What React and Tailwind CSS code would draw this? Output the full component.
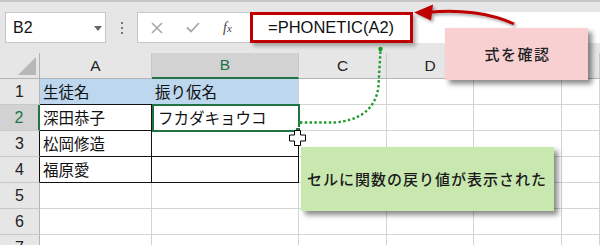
import React from 'react';

const colW = ['w-[40px]', 'w-[112px]', 'w-[147px]', 'w-[88px]', 'w-[87px]', 'w-[88px]', 'w-[38px]'];

function HeaderCell({ w, selected, children }) {
  return (
    <div
      className={`${w} h-full shrink-0 flex items-center justify-center border-r border-[#c8c8c8] text-[15.5px] ${
        selected ? 'bg-[#d2d2d2] text-[#217346] border-b-2 border-b-[#217346]' : 'bg-[#e6e6e6] text-[#222] border-b border-b-[#b4b4b4]'
      }`}
    >
      {children}
    </div>
  );
}

function Cell({ w, className = '', children }) {
  return (
    <div className={`${w} h-full shrink-0 flex items-center pl-[3px] text-[15.5px] text-[#111] font-['Noto_Sans_CJK_JP',sans-serif] ${className}`}>
      {children}
    </div>
  );
}

const rows = [
  { n: 1, a: '生徒名', b: '振り仮名' },
  { n: 2, a: '深田恭子', b: 'フカダキョウコ' },
  { n: 3, a: '松岡修造', b: '' },
  { n: 4, a: '福原愛', b: '' },
  { n: 5, a: '', b: '' },
  { n: 6, a: '', b: '' },
  { n: 7, a: '', b: '' },
];

export default function App() {
  return (
    <div className="relative w-[600px] h-[245px] overflow-hidden bg-white font-['Liberation_Sans','Noto_Sans_CJK_JP',sans-serif]">
      {/* formula bar strip */}
      <div className="h-[53px] bg-[#e6e6e6] border-t-2 border-[#c6c6c6] flex items-start pt-[10px]">
        <div className="ml-[5px] w-[101px] h-[31px] bg-white border border-[#c6c6c6] flex items-center pl-[7px] relative">
          <span className="text-[16px] text-[#111]">B2</span>
          <div className="absolute left-[88px] top-[13px] w-0 h-0 border-l-[4px] border-r-[4px] border-t-[5px] border-l-transparent border-r-transparent border-t-[#666]" />
        </div>
        <div className="w-[31px] h-[31px] flex flex-col items-center justify-center gap-[3px]">
          <div className="w-[2px] h-[2px] bg-[#777]" />
          <div className="w-[2px] h-[2px] bg-[#777]" />
          <div className="w-[2px] h-[2px] bg-[#777]" />
        </div>
        <div className="w-[113px] h-[31px] bg-white border border-r-0 border-[#c6c6c6] flex items-center">
          <svg width="12" height="12" viewBox="0 0 12 12" className="ml-[13px]">
            <path d="M1 1L11 11M11 1L1 11" stroke="#a8a8a8" strokeWidth="1.6" />
          </svg>
          <svg width="14" height="11" viewBox="0 0 14 11" className="ml-[23px]">
            <path d="M1 5.5L5 9.5L13 1" stroke="#a8a8a8" strokeWidth="1.8" fill="none" />
          </svg>
          <span className="ml-[23px] text-[14px] italic text-[#444] font-['Liberation_Serif',serif] leading-none">
            f<span className="text-[11px]">x</span>
          </span>
        </div>
        <div className="flex-1 h-[31px] bg-white">
          <div className="w-[163px] h-[31px] border-[3px] border-[#c00000] flex items-center pl-[15px] shadow-[3px_3px_4px_rgba(0,0,0,0.3)]">
            <span className="text-[16.5px] text-[#111] whitespace-nowrap">=PHONETIC(A2)</span>
          </div>
        </div>
      </div>

      {/* column headers */}
      <div className="h-[26px] flex">
        <div className="w-[40px] h-full shrink-0 bg-[#e6e6e6] border-r border-b border-[#b4b4b4] relative">
          <svg className="absolute right-[3px] bottom-[3px]" width="18" height="18" viewBox="0 0 18 18">
            <polygon points="18,0 18,18 0,18" fill="#b8b8b8" />
          </svg>
        </div>
        <HeaderCell w={colW[1]}>A</HeaderCell>
        <HeaderCell w={colW[2]} selected>B</HeaderCell>
        <HeaderCell w={colW[3]}>C</HeaderCell>
        <HeaderCell w={colW[4]}>D</HeaderCell>
        <HeaderCell w={colW[5]}>E</HeaderCell>
        <HeaderCell w={colW[6]}>F</HeaderCell>
      </div>

      {/* rows */}
      {rows.map((r) => {
        const inTable = r.n >= 2 && r.n <= 4;
        const rowHead =
          r.n === 2
            ? 'bg-[#d2d2d2] text-[#217346] border-r-2 border-r-[#217346] border-b border-b-[#c8c8c8]'
            : inTable
            ? 'bg-[#e6e6e6] text-[#222] border-r border-r-[#111] border-b border-b-[#c8c8c8]'
            : 'bg-[#e6e6e6] text-[#222] border-r border-r-[#b4b4b4] border-b border-b-[#c8c8c8]';
        const aCls =
          r.n === 1
            ? 'bg-[#bdd7ee] border-b border-b-[#111]'
            : inTable
            ? 'border-r border-b border-[#111]'
            : 'border-r border-b border-[#d4d4d4]';
        const bCls =
          r.n === 1
            ? 'bg-[#bdd7ee] border-b border-b-[#111] border-r border-r-[#d4d4d4]'
            : inTable
            ? 'border-r border-b border-[#111]'
            : 'border-r border-b border-[#d4d4d4]';
        return (
          <div key={r.n} className="h-[26px] flex">
            <div className={`w-[40px] h-full shrink-0 flex items-center justify-center text-[16px] ${rowHead}`}>{r.n}</div>
            <Cell w={colW[1]} className={aCls}>{r.a}</Cell>
            <Cell w={colW[2]} className={`relative ${bCls} ${r.n === 2 ? 'pl-[6px]' : ''}`}>
              {r.b}
              {r.n === 2 && (
                <>
                  <div className="absolute left-0 -top-[1px] w-[148px] h-[28px] border-2 border-[#217346]" />
                  <div className="absolute -right-[3px] -bottom-[3px] w-[6px] h-[6px] bg-[#217346] border border-white" />
                </>
              )}
            </Cell>
            <Cell w={colW[3]} className="border-r border-b border-[#d4d4d4]" />
            <Cell w={colW[4]} className="border-r border-b border-[#d4d4d4]" />
            <Cell w={colW[5]} className="border-r border-b border-[#d4d4d4]" />
            <Cell w={colW[6]} className="border-r border-b border-[#d4d4d4]" />
          </div>
        );
      })}

      {/* annotations */}
      <svg className="absolute left-0 top-0 pointer-events-none" width="600" height="245" viewBox="0 0 600 245">
        <path
          d="M300 122.5 L334 122.5 C358 121, 376 110, 378.5 86 L380.5 50"
          fill="none"
          stroke="#1d9a2a"
          strokeWidth="2.4"
          strokeDasharray="2.4 2.4"
        />
        <circle cx="380.5" cy="49" r="2.2" fill="#1d9a2a" />
        <circle cx="300" cy="122.5" r="1.6" fill="#1d9a2a" />
        <g className="drop-shadow-[2px_2px_1.5px_rgba(0,0,0,0.35)]">
          <path d="M428 12.5 C458 9, 490 13, 514 24" fill="none" stroke="#c00000" strokeWidth="3" />
          <polygon points="414,12.5 433,4.5 431,20.5" fill="#c00000" />
        </g>
      </svg>

      <div className="absolute left-[289px] top-[130px]">
        <svg width="17" height="16" viewBox="0 0 17 16">
          <polygon
            points="5.5,0.5 11.5,0.5 11.5,5 16.5,5 16.5,11 11.5,11 11.5,15.5 5.5,15.5 5.5,11 0.5,11 0.5,5 5.5,5"
            fill="white"
            stroke="black"
            strokeWidth="1"
          />
        </svg>
      </div>

      <div className="absolute left-[445px] top-[28px] w-[143px] h-[52px] bg-[#f8d0d2] flex items-center justify-center shadow-[4px_4px_5px_rgba(0,0,0,0.45)]">
        <span className="text-[15px] font-medium tracking-[1.5px] text-[#222] font-['Noto_Sans_CJK_JP',sans-serif] pl-[2px]">式を確認</span>
      </div>

      <div className="absolute left-[301px] top-[147px] w-[253px] h-[64px] bg-[#c9e8b0] flex items-center pl-[6px] shadow-[4px_4px_5px_rgba(0,0,0,0.45)]">
        <span className="text-[15px] font-medium tracking-[1px] text-[#1a1a1a] font-['Noto_Sans_CJK_JP',sans-serif] whitespace-nowrap">
          セルに関数の戻り値が表示された
        </span>
      </div>
    </div>
  );
}
